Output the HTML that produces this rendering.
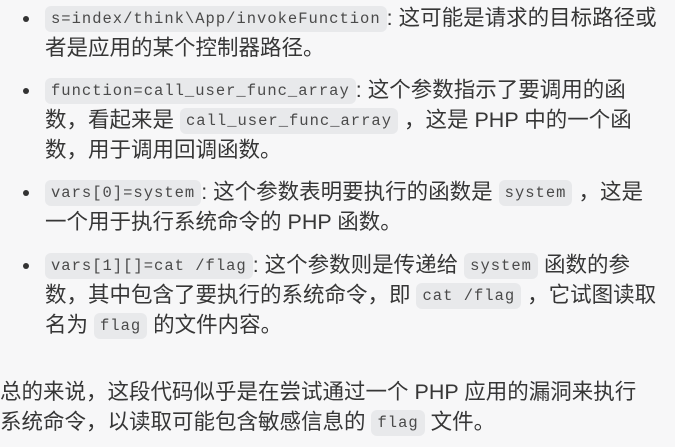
<!DOCTYPE html>
<html><head><meta charset="utf-8"><style>
html,body{margin:0;padding:0;}
body{width:675px;height:447px;background:#f7f7f8;overflow:hidden;position:relative;font-family:"Liberation Sans","Noto Sans CJK SC",sans-serif;font-size:21.5px;color:#363636;}
.l{position:absolute;white-space:nowrap;height:30px;line-height:30px;}
code{font-family:"Liberation Mono",monospace;font-size:15.5px;color:#4a4a4a;background:#e8e9eb;border-radius:6px;padding:4px 6px;letter-spacing:1px;vertical-align:2px;}
.b{position:absolute;width:6px;height:6px;border-radius:50%;background:#333;left:23px;}
</style></head><body>
<div class="b" style="top:16px"></div>
<div class="l" style="left:45px;top:3px"><code>s=index/think\App/invokeFunction</code>: 这可能是请求的目标路径或</div>
<div class="l" style="left:45px;top:33px">者是应用的某个控制器路径。</div>
<div class="b" style="top:88px"></div>
<div class="l" style="left:45px;top:75px"><code>function=call_user_func_array</code>: 这个参数指示了要调用的函</div>
<div class="l" style="left:45px;top:105px">数，看起来是 <code>call_user_func_array</code> ，这是 PHP 中的一个函</div>
<div class="l" style="left:45px;top:135px">数，用于调用回调函数。</div>
<div class="b" style="top:190px"></div>
<div class="l" style="left:45px;top:177px"><code>vars[0]=system</code>: 这个参数表明要执行的函数是 <code>system</code> ，这是</div>
<div class="l" style="left:45px;top:207px">一个用于执行系统命令的 PHP 函数。</div>
<div class="b" style="top:263px"></div>
<div class="l" style="left:45px;top:250px"><code>vars[1][]=cat /flag</code>: 这个参数则是传递给 <code>system</code> 函数的参</div>
<div class="l" style="left:45px;top:280px">数，其中包含了要执行的系统命令，即 <code>cat /flag</code> ，它试图读取</div>
<div class="l" style="left:45px;top:310px">名为 <code>flag</code> 的文件内容。</div>
<div class="l" style="left:0;top:377px">总的来说，这段代码似乎是在尝试通过一个 PHP 应用的漏洞来执行</div>
<div class="l" style="left:0;top:407px">系统命令，以读取可能包含敏感信息的 <code>flag</code> 文件。</div>
</body></html>
